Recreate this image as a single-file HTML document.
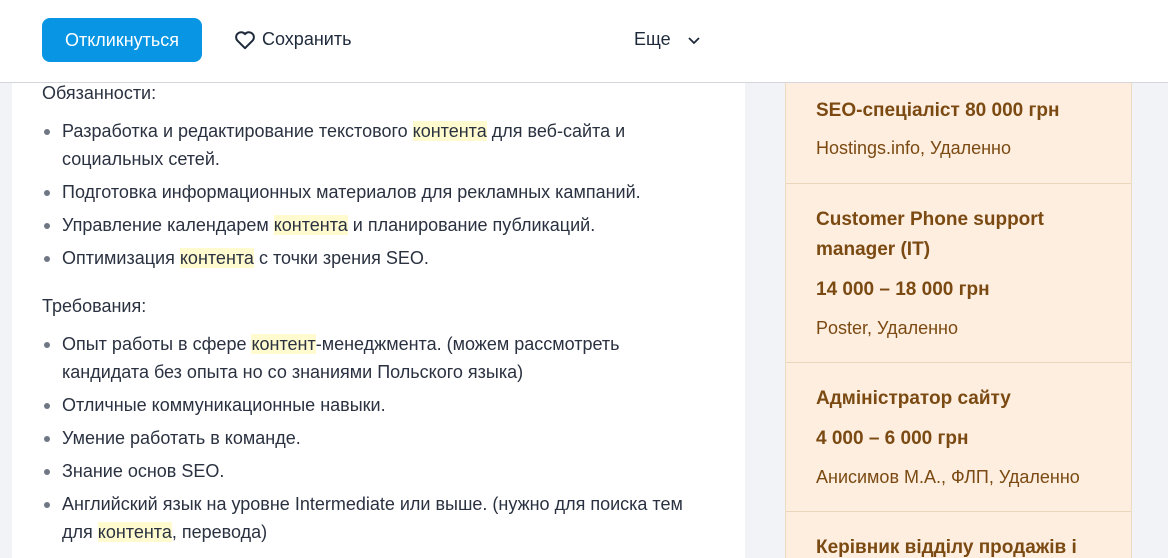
<!DOCTYPE html>
<html><head><meta charset="utf-8"><style>
*{margin:0;padding:0;box-sizing:border-box}
html,body{width:1168px;height:558px;overflow:hidden}
body{background:#f2f3f6;font-family:"Liberation Sans",sans-serif;position:relative}
.hdr{position:absolute;left:0;top:0;width:1168px;height:83px;background:#fff;border-bottom:1px solid #d4d6db;z-index:2}
.btn{position:absolute;left:42px;top:18px;width:160px;height:44px;background:#0895e3;color:#fff;border-radius:8px;font-size:18px;line-height:44px;text-align:center}
.save{position:absolute;left:234px;top:29px;font-size:18px;color:#1e2a3b;display:flex;align-items:center;gap:6px}
.more{position:absolute;left:634px;top:29px;font-size:18px;color:#1e2a3b}
.main{position:absolute;left:12px;top:60px;width:733px;height:520px;background:#fff}
.c{position:absolute;left:42px;top:79px;width:663px;color:#2a3140;font-size:18px;line-height:28px}
.c ul{list-style:none;margin:10px 0 20px}
.c li{position:relative;padding-left:20px;margin-bottom:5px}
.c li:before{content:"";position:absolute;left:2px;top:12px;width:6px;height:6px;border-radius:50%;background:#707784}
mark{background:#fffbcf;color:inherit}
.side{position:absolute;left:785px;top:60px;width:347px;height:520px;background:#fdeee0;border-left:1px solid #eedbc4;border-right:1px solid #eedbc4;color:#7b4a12}
.it{border-bottom:1px solid #ebd5bd;padding:0 30px}
.b{font-weight:bold;font-size:19px;line-height:30px}
.s{font-size:18px;line-height:28px}
</style></head><body>
<div class="hdr">
<div class="btn">Откликнуться</div>
<div class="save"><svg width="22" height="20" viewBox="0 0 24 22"><path d="M12 20 L3.5 11.5 A5 5 0 0 1 12 4.5 A5 5 0 0 1 20.5 11.5 Z" fill="none" stroke="#1e2a3b" stroke-width="2.2" stroke-linejoin="round"/></svg>Сохранить</div>
<div class="more">Еще <svg style="margin-left:12px" width="12" height="8" viewBox="0 0 12 8"><path d="M1 1l5 5 5-5" fill="none" stroke="#1e2a3b" stroke-width="1.8"/></svg></div>
</div>
<div class="main"></div>
<div class="c">
<p>Обязанности:</p>
<ul>
<li>Разработка и редактирование текстового <mark>контента</mark> для веб-сайта и социальных сетей.</li>
<li>Подготовка информационных материалов для рекламных кампаний.</li>
<li>Управление календарем <mark>контента</mark> и планирование публикаций.</li>
<li>Оптимизация <mark>контента</mark> с точки зрения SEO.</li>
</ul>
<p>Требования:</p>
<ul>
<li>Опыт работы в сфере <mark>контент</mark>-менеджмента. (можем рассмотреть кандидата без опыта но со знаниями Польского языка)</li>
<li>Отличные коммуникационные навыки.</li>
<li>Умение работать в команде.</li>
<li>Знание основ SEO.</li>
<li>Английский язык на уровне Intermediate или выше. (нужно для поиска тем для <mark>контента</mark>, перевода)</li>
</ul>
</div>
<div class="side">
<div class="it" style="padding-top:36px;height:124px"><div class="b">SEO-спеціаліст 80 000 грн</div><div class="s" style="margin-top:8px">Hostings.info, Удаленно</div></div>
<div class="it" style="padding-top:21px;height:179px"><div class="b">Customer Phone support manager (IT)</div><div class="b" style="margin-top:10px">14 000 – 18 000 грн</div><div class="s" style="margin-top:9px">Poster, Удаленно</div></div>
<div class="it" style="padding-top:21px;height:149px"><div class="b">Адміністратор сайту</div><div class="b" style="margin-top:10px">4 000 – 6 000 грн</div><div class="s" style="margin-top:9px">Анисимов М.А., ФЛП, Удаленно</div></div>
<div class="it" style="padding-top:21px;border:none"><div class="b">Керівник відділу продажів і</div></div>
</div>
</body></html>
